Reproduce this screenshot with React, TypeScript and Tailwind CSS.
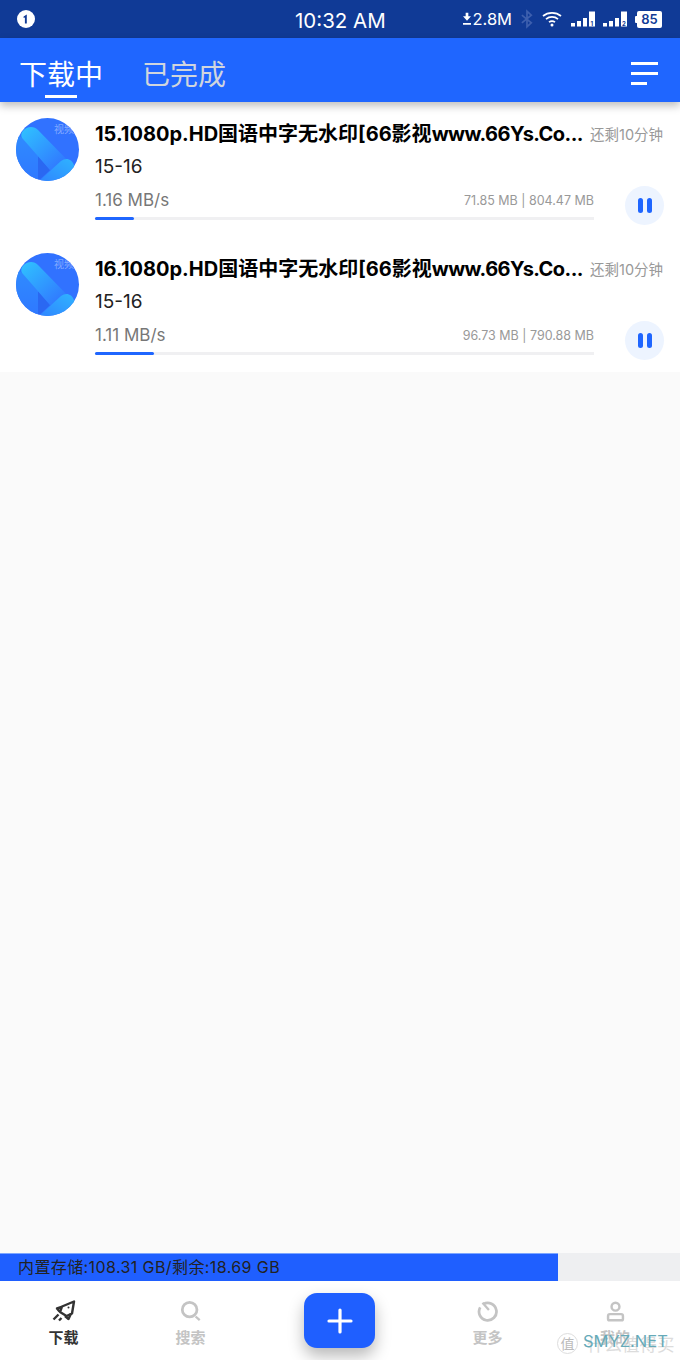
import React from 'react';

const font = { fontFamily: 'Inter, "Noto Sans CJK SC", sans-serif' };

const downloads = [
  { head: '15.1080p.HD国语中字无水印[66影视', tail: 'www.66Ys.Co...', speed: '1.16 MB/s', size: '71.85 MB | 804.47 MB', progress: 39 },
  { head: '16.1080p.HD国语中字无水印[66影视', tail: 'www.66Ys.Co...', speed: '1.11 MB/s', size: '96.73 MB | 790.88 MB', progress: 59 },
];

function StatusBar() {
  return (
    <div className="relative flex h-[38px] items-center bg-[#103a96] pl-[17px] pr-[18px] text-white">
      <svg width="18" height="18" viewBox="0 0 18 18">
        <circle cx="9" cy="9" r="9" fill="#fff" />
        <path d="M6.6 6.4 9.8 4.6V13.4H7.9V7.4L6.6 8.1Z" fill="#103a96" />
      </svg>
      <span className="absolute left-[295px] top-[8px] text-[20.5px] leading-[25px]">10:32 AM</span>
      <div className="ml-auto flex items-center">
        <svg width="8" height="14" viewBox="0 0 9 14" fill="#fff">
          <path d="M3 0H6V4H9L4.5 9 0 4H3ZM0 11.5H9V13.5H0Z" />
        </svg>
        <span className="ml-[1px] text-[16.5px] leading-[20px]">2.8M</span>
        <svg className="ml-[9px]" width="12" height="20" viewBox="0 0 14 20" fill="none" stroke="#3d5fae" strokeWidth="2">
          <path d="M1 5.5 12 14.5 7 19V1L12 5.5 1 14.5" />
        </svg>
        <svg className="ml-[9px]" width="20" height="16" viewBox="0 0 20 16" fill="none" stroke="#fff" strokeWidth="1.7">
          <path d="M1 5C6 .8 14 .8 19 5M4 8.2C7.5 5.2 12.5 5.2 16 8.2M7 11.2C8.8 9.8 11.2 9.8 13 11.2" />
          <circle cx="10" cy="14" r="1.5" fill="#fff" stroke="none" />
        </svg>
        <svg className="ml-[9px]" width="24" height="16" viewBox="0 0 24 16" fill="#fff">
          <path d="M0 12H4V15.5H0ZM6 10H10V15.5H6ZM12 7H16V15.5H12ZM18 0.5H24V15.5H18Z" />
          <text x="19.5" y="15" fontSize="6" fill="#103a96" fontWeight="700">1</text>
        </svg>
        <svg className="ml-[8px]" width="24" height="16" viewBox="0 0 24 16" fill="#fff">
          <path d="M0 12H4V15.5H0ZM6 10H10V15.5H6ZM12 7H16V15.5H12ZM18 0.5H24V15.5H18Z" />
          <text x="19" y="15" fontSize="6" fill="#103a96" fontWeight="700">2</text>
        </svg>
        <div className="ml-[8px] flex items-center">
          <div className="h-[7px] w-[2px] rounded-l-[1px] bg-white" />
          <div className="flex h-[17px] w-[25px] items-center justify-center rounded-[2px] bg-white text-[13px] font-semibold leading-none text-[#103a96]">85</div>
        </div>
      </div>
    </div>
  );
}

function Header() {
  return (
    <div className="relative z-10 flex h-[64px] items-start bg-[#1f66ff] pl-[19px] pr-[22px] shadow-[0_4px_8px_rgba(0,0,0,0.25)]">
      <div className="relative">
        <div className="pt-[20px] text-[28px] leading-[35px] text-white">下载中</div>
        <div className="absolute left-[26px] top-[57px] h-[3px] w-[32px] bg-white" />
      </div>
      <div className="ml-[39px] pt-[20px] text-[28px] leading-[35px] text-[#d0d5dd]">已完成</div>
      <div className="ml-auto mt-[24px] flex flex-col gap-[7px]">
        <div className="h-[3px] w-[27px] bg-white" />
        <div className="h-[3px] w-[27px] bg-white" />
        <div className="h-[3px] w-[16px] bg-white" />
      </div>
    </div>
  );
}

function Cover() {
  return (
    <div className="relative h-[63px] w-[63px] shrink-0 overflow-hidden rounded-full bg-[#3172ff]">
      <svg width="63" height="63" viewBox="0 0 63 63" className="absolute inset-0">
        <defs>
          <linearGradient id="coverBand" x1="0" y1="0" x2="1" y2="1">
            <stop offset="0" stopColor="#2fc4ff" />
            <stop offset="0.85" stopColor="#3172ff" />
          </linearGradient>
          <linearGradient id="coverTail" x1="1" y1="0" x2="0" y2="1">
            <stop offset="0" stopColor="#2fb4ff" />
            <stop offset="1" stopColor="#2f86ff" />
          </linearGradient>
          <linearGradient id="coverPanel" x1="0" y1="0" x2="0" y2="1">
            <stop offset="0" stopColor="#2f8cff" />
            <stop offset="1" stopColor="#2f78ff" />
          </linearGradient>
        </defs>
        <path d="M0 15 6 20 22 38V63H0Z" fill="url(#coverPanel)" />
        <path d="M22 38 34 52 22 63Z" fill="#2a68f2" />
        <path d="M6 20C3 15 9 9 15 9 18 9 20 10 22 12L58 49 46 56 34 52Z" fill="url(#coverBand)" />
        <path d="M23 63 45 43C50 39 56 41 58 47L60 52 42 63Z" fill="url(#coverTail)" />
      </svg>
      <span className="absolute left-[38px] top-[5px] whitespace-nowrap text-[10px] leading-[12px] text-white/40">视频</span>
    </div>
  );
}

function DownloadRow({ item }: { item: (typeof downloads)[number] }) {
  return (
    <div className="flex h-[135px] px-[16px] pt-[16px]">
      <Cover />
      <div className="ml-[16px] min-w-0 flex-1">
        <div className="flex h-[33px] items-start">
          <div className="w-[495px] shrink-0 whitespace-nowrap text-[20px] font-bold leading-[32px] text-black">
            {item.head}
            <span className="tracking-[-0.55px]">{item.tail}</span>
          </div>
          <div className="mt-[1px] whitespace-nowrap text-[14.5px] leading-[32px] text-[#999]">还剩10分钟</div>
        </div>
        <div className="mt-[3px] text-[19px] leading-[26px] text-[#222]">15-16</div>
        <div className="flex">
          <div className="w-[499px] shrink-0">
            <div className="mt-[8px] flex h-[24px] items-center justify-between">
              <span className="text-[17px] leading-[24px] text-[#777]">{item.speed}</span>
              <span className="pt-[2px] text-[12.5px] leading-[24px] text-[#999]">{item.size}</span>
            </div>
            <div className="mt-[5px] h-[3px] bg-[#f0f0f2]">
              <div className="h-full rounded-full bg-[#1f66ff]" style={{ width: `${(item.progress / 499) * 100}%` }} />
            </div>
          </div>
          <div className="ml-auto mt-[6px] flex h-[39px] w-[39px] items-center justify-center gap-[4px] rounded-full bg-[#edf4ff]">
            <div className="h-[15px] w-[5px] rounded-full bg-[#1f66ff]" />
            <div className="h-[15px] w-[5px] rounded-full bg-[#1f66ff]" />
          </div>
        </div>
      </div>
    </div>
  );
}

function StorageBar() {
  return (
    <div className="h-[28px] bg-[#eeeff1]">
      <div className="flex h-full w-[558px] items-center bg-[#1f5fff] pl-[18px] text-[16px] leading-[20px] tracking-[0.4px] text-[#222] shadow-[inset_0_1px_0_#7da6ff]">
        <span className="whitespace-nowrap">内置存储:108.31 GB/剩余:18.69 GB</span>
      </div>
    </div>
  );
}

function NavItem({ label, active, width, children }: { label: string; active?: boolean; width: string; children: React.ReactNode }) {
  return (
    <div className={`flex ${width} flex-col items-center pt-[18px]`}>
      <div className="flex h-[24px] w-[24px] items-center justify-center">{children}</div>
      <span className={`mt-[5px] text-[15px] font-bold leading-[20px] ${active ? 'text-[#333]' : 'text-[#c4c4c4]'}`}>{label}</span>
    </div>
  );
}

function BottomNav() {
  return (
    <div className="relative flex h-[79px] bg-white">
      <NavItem label="下载" active width="w-[127px]">
        <svg width="24" height="24" viewBox="0 0 24 24" fill="none" stroke="#333" strokeWidth="2.4" strokeLinejoin="round">
          <path d="M8 13 10 7.5 22 2.500 20 14.500 14.500 17Z" />
          <path d="M9.500 8 5 9.500 7.500 12.500M19 14.500 16.500 20 13 17" />
          <path d="M6.500 15.500 1.500 20.500M9.500 19 7 21.500" />
          <circle cx="16.500" cy="8.500" r="1" fill="#333" stroke="none" />
        </svg>
      </NavItem>
      <NavItem label="搜索" width="w-[127px]">
        <svg width="22" height="22" viewBox="0 0 24 24" fill="none" stroke="#c4c4c4" strokeWidth="3">
          <circle cx="10.5" cy="10.5" r="8" />
          <path d="M17 18 21.5 22" strokeWidth="2.5" />
        </svg>
      </NavItem>
      <div className="flex w-[171px] justify-center pt-[12px]">
        <div className="flex h-[55px] w-[71px] items-center justify-center rounded-[13px] bg-[#1f5fff] shadow-[0_8px_16px_rgba(0,0,0,0.28)]">
          <svg width="26" height="26" viewBox="0 0 26 26" stroke="#fff" strokeWidth="3.2" strokeLinecap="round">
            <path d="M13 2V24M2 13H24" />
          </svg>
        </div>
      </div>
      <NavItem label="更多" width="w-[125px]">
        <svg width="22" height="22" viewBox="0 0 24 24" fill="none" stroke="#c4c4c4" strokeWidth="3">
          <path d="M7 4.5A9.5 9.5 0 1 1 3.5 8" />
          <path d="M6 3 13 11" strokeWidth="2.5" />
        </svg>
      </NavItem>
      <NavItem label="我的" width="w-[130px]">
        <svg width="21" height="21" viewBox="0 0 24 24" fill="none" stroke="#c4c4c4" strokeWidth="2.8">
          <circle cx="12" cy="6.5" r="4.5" />
          <path d="M5.5 15H18.5Q20.5 15 20.5 17V20.5Q20.5 22 19 22H5Q3.5 22 3.5 20.5V17Q3.5 15 5.5 15Z" />
        </svg>
      </NavItem>
      {/* watermark over the corner */}
      <div className="absolute left-[557px] top-[52px] flex h-[21px] w-[21px] items-center justify-center rounded-full border border-[#ddd] text-[14px] leading-none text-[#bbb]">值</div>
      <span className="absolute left-[587px] top-[52px] whitespace-nowrap text-[17.5px] leading-[24px] text-[#dcdcdc]">什么值得买</span>
      <span className="absolute left-[583px] top-[49px] text-[16.5px] leading-[22px] text-[#66aab8]">SMYZ.NET</span>
    </div>
  );
}

export default function App() {
  return (
    <div className="flex h-[1360px] w-[680px] flex-col overflow-hidden bg-[#fafafa]" style={font}>
      <StatusBar />
      <Header />
      <div className="bg-white">
        {downloads.map((item, i) => (
          <DownloadRow key={i} item={item} />
        ))}
      </div>
      <div className="flex-1" />
      <StorageBar />
      <BottomNav />
    </div>
  );
}
